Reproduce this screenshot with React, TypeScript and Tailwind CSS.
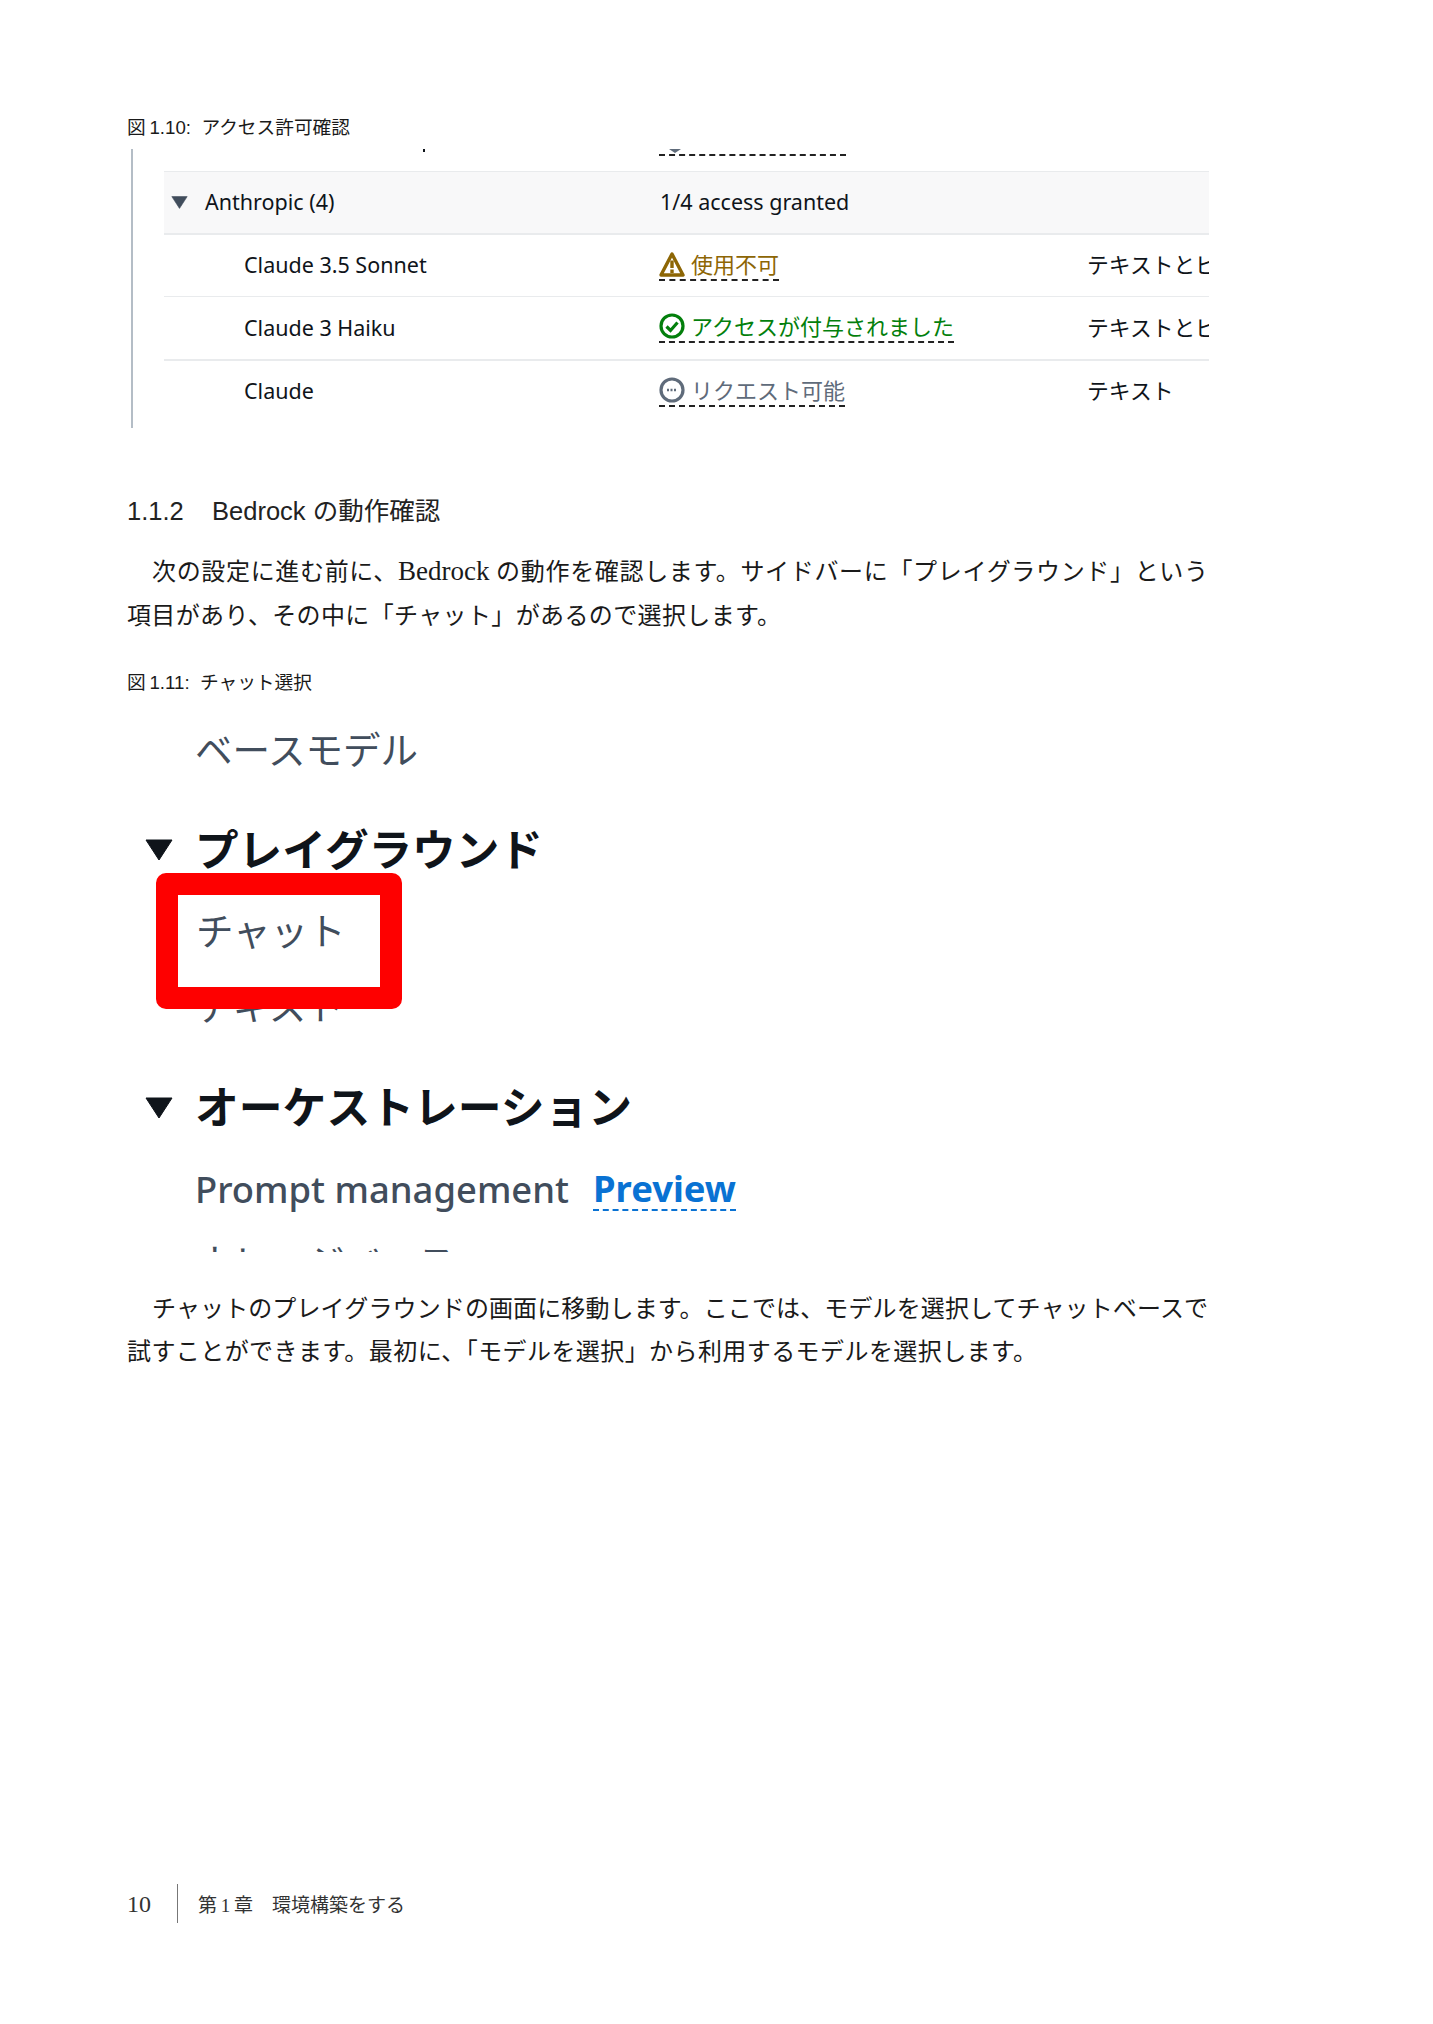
import type { ReactNode } from 'react'

const cjk = "font-['Liberation_Sans','Noto_Sans_CJK_JP',sans-serif]"
const serif = "font-['Liberation_Serif','Noto_Sans_CJK_JP',serif]"
const ember = "font-['Noto_Sans','Noto_Sans_CJK_JP',sans-serif]"

const WarningIcon = () => (
  <svg viewBox="0 0 26 26" className="w-[26px] h-[26px] shrink-0" fill="none">
    <path d="M13 3 L24 24 H2 Z" stroke="#8d6605" strokeWidth="3.4" strokeLinejoin="round" />
    <path d="M13 9.5 V17" stroke="#8d6605" strokeWidth="3.4" />
    <path d="M13 18.5 V22" stroke="#8d6605" strokeWidth="3.4" />
  </svg>
)

const CheckIcon = () => (
  <svg viewBox="0 0 26 26" className="w-[26px] h-[26px] shrink-0" fill="none">
    <circle cx="13" cy="13" r="11" stroke="#037f0c" strokeWidth="3.2" />
    <path d="M7.5 13.5 L11.5 17.5 L18.5 9.5" stroke="#037f0c" strokeWidth="3.2" />
  </svg>
)

const PendingIcon = () => (
  <svg viewBox="0 0 26 26" className="w-[26px] h-[26px] shrink-0" fill="none">
    <circle cx="13" cy="13" r="11" stroke="#5f6b7a" strokeWidth="3.2" />
    <path d="M8 13 H18" stroke="#5f6b7a" strokeWidth="2.5" strokeDasharray="2 1.5" />
  </svg>
)

const Triangle = ({ className }: { className: string }) => (
  <svg viewBox="0 0 28 22" className={className}>
    <path d="M1 1 H27 L14 21 Z" fill="currentColor" stroke="currentColor" strokeLinejoin="round" />
  </svg>
)

const models = [
  { name: 'Claude 3.5 Sonnet', icon: <WarningIcon />, status: '使用不可', color: 'text-[#8d6605]', type: 'テキストとビジョン', line: 'border-t-2' },
  { name: 'Claude 3 Haiku', icon: <CheckIcon />, status: 'アクセスが付与されました', color: 'text-[#037f0c]', type: 'テキストとビジョン', line: 'border-t' },
  { name: 'Claude', icon: <PendingIcon />, status: 'リクエスト可能', color: 'text-[#5f6b7a]', type: 'テキスト', line: 'border-t-2' },
]

const Caption = ({ children, className }: { children: string; className: string }) => (
  <div className={`h-[30px] flex items-center whitespace-pre text-[18.7px] text-[#1a1a1a] ${cjk} ${className}`}>{children}</div>
)

const Line = ({ children, className }: { children: ReactNode; className: string }) => (
  <div className={`whitespace-nowrap [text-align:justify] [text-align-last:justify] ${className}`}>{children}</div>
)

export default function App() {
  return (
    <div className="w-[1433px] h-[2024px] bg-white overflow-hidden pt-[113px] pl-[127px]">
      <Caption className="">{'図\u20091.10:  アクセス許可確認'}</Caption>

      {/* access table */}
      <div className={`mt-[6px] ml-[4px] w-[1078px] h-[279px] border-l-2 border-[#b4bdc6] pl-[31px] overflow-hidden text-[21.5px] text-[#0f141a] ${ember}`}>
        <div className="h-[22px] grid grid-cols-[495px_429px_1fr]">
          <div className="pl-[259px]">
            <div className="w-[2px] h-[3px] bg-[#0f141a]" />
          </div>
          <div>
            <div className="ml-[10px] w-0 h-0 border-x-[6px] border-x-transparent border-t-[4px] border-t-[#5f6b7a]" />
            <div className="mt-[1px] w-[187px] border-t-2 border-dashed border-[#222]" />
          </div>
        </div>
        <div className="h-[62px] bg-[#f8f8f9] border-t border-[#e9ebed] grid grid-cols-[495px_429px_1fr] items-center">
          <div className="flex items-center pl-[7px]">
            <Triangle className="w-[17px] h-[13px] text-[#414d5c]" />
            <span className="ml-[17px]">Anthropic (4)</span>
          </div>
          <span className="pl-[1px]">1/4 access granted</span>
        </div>
        {models.map((m) => (
          <div key={m.name} className={`h-[63px] border-[#e9ebed] ${m.line} grid grid-cols-[495px_429px_1fr] items-center whitespace-nowrap overflow-hidden`}>
            <span className="pl-[80px]">{m.name}</span>
            <div className="pt-[4px]">
              <div className={`inline-flex items-center gap-[6px] border-b-2 border-dashed border-[#222] pb-[1px] ${m.color}`}>
                {m.icon}
                <span className="leading-[28px] text-[22px]">{m.status}</span>
              </div>
            </div>
            <span className="overflow-hidden text-[21.8px] -ml-[1px]">{m.type}</span>
          </div>
        ))}
      </div>

      <h3 className={`mt-[63px] leading-[40px] text-[25.5px] text-[#222] whitespace-pre ${cjk}`}>1.1.2    Bedrock の動作確認</h3>

      <div className={`mt-[19px] text-[24px] leading-[44px] text-[#1a1a1a] ${serif}`}>
        <Line className="w-[1081px] pl-[25px]">
          次の設定に進む前に、<span className="text-[27px] leading-none">Bedrock</span> の動作を確認します。サイドバーに「プレイグラウンド」という
        </Line>
        <Line className="w-[654px]">項目があり、その中に「チャット」があるので選択します。</Line>
      </div>

      <Caption className="mt-[30px]">{'図\u20091.11:  チャット選択'}</Caption>

      {/* sidebar crop */}
      <div className={`relative mt-[14px] w-[700px] h-[540px] overflow-hidden text-[37.5px] text-[#414d5c] ${ember}`}>
        <div className="h-[76px] pl-[68px] leading-[76px]">ベースモデル</div>
        <div className="mt-[24px] h-[76px] pl-[18px] flex items-center gap-[22px] text-[#0f141a]">
          <Triangle className="w-[28px] h-[22px]" />
          <span className="text-[43.6px] font-bold">プレイグラウンド</span>
        </div>
        <div className="mt-[88px] h-[60px] pl-[68px] leading-[60px]">テキスト</div>
        <div className="absolute left-[29px] top-[161px] w-[246px] h-[136px] border-[22px] border-[#fe0000] rounded-[10px] bg-white pl-[18px] pt-[15px] leading-[42px]">
          チャット
        </div>
        <div className="mt-[34px] h-[76px] pl-[18px] flex items-center gap-[22px] text-[#0f141a]">
          <Triangle className="w-[28px] h-[22px]" />
          <span className="text-[43.8px] font-bold">オーケストレーション</span>
        </div>
        <div className="-mt-[-5px] h-[76px] pl-[68px] flex items-center gap-[24px] text-[36.4px]">
          <span className="font-medium">Prompt management</span>
          <span className="font-bold text-[#0972d3] leading-[42px] border-b-2 border-dashed border-[#0972d3]">Preview</span>
        </div>
        <div className="-mt-[3px] h-[76px] pl-[68px] leading-[76px]">ナレッジベース</div>
      </div>

      <div className={`mt-[36px] text-[24px] leading-[43px] text-[#1a1a1a] ${serif}`}>
        <Line className="w-[1081px] pl-[25px]">チャットのプレイグラウンドの画面に移動します。ここでは、モデルを選択してチャットベースで</Line>
        <Line className="w-[910px]">試すことができます。最初に、「モデルを選択」から利用するモデルを選択します。</Line>
      </div>

      {/* footer */}
      <div className={`mt-[510px] h-[39px] flex items-center text-[#333] ${serif}`}>
        <span className="text-[24px] w-[50px]">10</span>
        <div className="w-px h-[39px] bg-[#777]" />
        <span className="ml-[20px] pt-[5px] text-[19px] whitespace-pre">{'第\u20091\u2009章　環境構築をする'}</span>
      </div>
    </div>
  )
}
